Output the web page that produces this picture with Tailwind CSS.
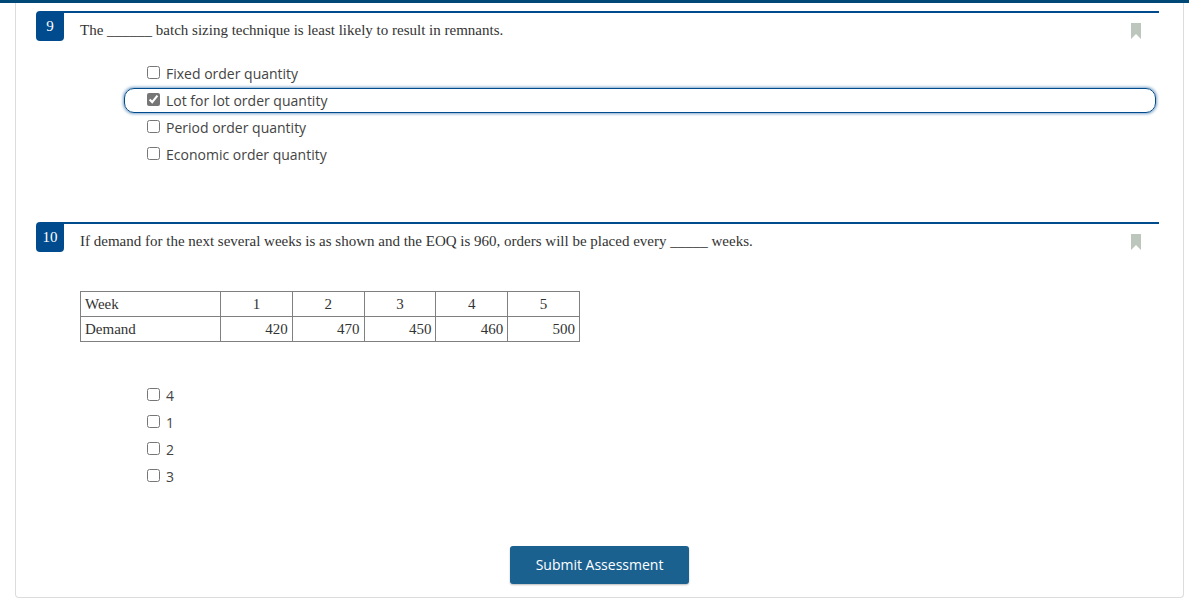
<!DOCTYPE html>
<html lang="en">
<head>
<meta charset="utf-8">
<meta name="viewport" content="width=device-width, initial-scale=1">
<title>Assessment</title>
<script src="https://cdn.jsdelivr.net/npm/@tailwindcss/browser@4"></script>
</head>
<body class="bg-white text-[#333] font-['Open_Sans',sans-serif] text-sm">
<header class="h-[3px] bg-[#004976]"></header>
<main class="ml-[15px] mr-[5px] rounded-b border border-t-0 border-[#dcdcdc] pt-2 pb-[13px]">
<form>
  <section class="ml-5 mr-6 flex h-[211px] items-start">
    <div class="flex h-[30px] w-7 shrink-0 items-center justify-center rounded-l rounded-br bg-[#004b8d] pt-0.5 font-['Liberation_Serif',serif] text-[15px] text-white">9</div>
    <div class="min-w-0 grow border-t-2 border-[#004b8d] pl-4">
      <div class="flex items-start justify-between pt-[7px] pr-[18px]">
        <h2 id="q9" class="font-['Liberation_Serif',serif] text-[15px] leading-5">The ______ batch sizing technique is least likely to result in remnants.</h2>
        <button type="button" aria-label="Bookmark question 9" class="mt-[3px]"><svg class="block h-4 w-[10px]" viewBox="0 0 10 16"><path d="M0 0H10V16L5 11L0 16Z" fill="#bcc6bc"/></svg></button>
      </div>
      <div role="group" aria-labelledby="q9" class="mt-[21px] mr-[3px] ml-11 flex flex-col gap-0.5 text-[#444]">
        <label class="flex h-[25px] items-center gap-1.5 rounded-[10px] border border-transparent pl-[22px]"><input type="checkbox" class="mb-0.5 size-[13px]"><span class="pt-px">Fixed order quantity</span></label>
        <label class="flex h-[25px] items-center gap-1.5 rounded-[10px] border border-[#004b8d] pl-[22px] shadow-[0_0_3px_1px_#7fa5c9]"><input type="checkbox" checked class="mb-0.5 size-[13px] accent-[#767676]"><span class="pt-px">Lot for lot order quantity</span></label>
        <label class="flex h-[25px] items-center gap-1.5 rounded-[10px] border border-transparent pl-[22px]"><input type="checkbox" class="mb-0.5 size-[13px]"><span class="pt-px">Period order quantity</span></label>
        <label class="flex h-[25px] items-center gap-1.5 rounded-[10px] border border-transparent pl-[22px]"><input type="checkbox" class="mb-0.5 size-[13px]"><span class="pt-px">Economic order quantity</span></label>
      </div>
    </div>
  </section>
  <section class="ml-5 mr-6 flex items-start">
    <div class="flex h-[30px] w-7 shrink-0 items-center justify-center rounded-l rounded-br bg-[#004b8d] pt-0.5 font-['Liberation_Serif',serif] text-[15px] text-white">10</div>
    <div class="min-w-0 grow border-t-2 border-[#004b8d] pl-4">
      <div class="flex items-start justify-between pt-[7px] pr-[18px]">
        <h2 id="q10" class="font-['Liberation_Serif',serif] text-[15px] leading-5">If demand for the next several weeks is as shown and the EOQ is 960, orders will be placed every _____ weeks.</h2>
        <button type="button" aria-label="Bookmark question 10" class="mt-[3px]"><svg class="block h-4 w-[10px]" viewBox="0 0 10 16"><path d="M0 0H10V16L5 11L0 16Z" fill="#bcc6bc"/></svg></button>
      </div>
      <table class="mt-10 w-[500px] table-fixed border-collapse font-['Liberation_Serif',serif] text-[15px] leading-6">
        <tr>
          <th scope="row" class="w-[140px] border border-[#808080] px-1 text-left font-normal">Week</th>
          <td class="border border-[#808080] text-center">1</td>
          <td class="border border-[#808080] text-center">2</td>
          <td class="border border-[#808080] text-center">3</td>
          <td class="border border-[#808080] text-center">4</td>
          <td class="border border-[#808080] text-center">5</td>
        </tr>
        <tr>
          <th scope="row" class="border border-[#808080] px-1 text-left font-normal">Demand</th>
          <td class="border border-[#808080] px-1 text-right">420</td>
          <td class="border border-[#808080] px-1 text-right">470</td>
          <td class="border border-[#808080] px-1 text-right">450</td>
          <td class="border border-[#808080] px-1 text-right">460</td>
          <td class="border border-[#808080] px-1 text-right">500</td>
        </tr>
      </table>
      <div role="group" aria-labelledby="q10" class="mt-[41px] mr-[3px] ml-11 flex flex-col gap-0.5 text-[#444]">
        <label class="flex h-[25px] items-center gap-1.5 rounded-[10px] border border-transparent pl-[22px]"><input type="checkbox" class="mb-0.5 size-[13px]"><span class="pt-px">4</span></label>
        <label class="flex h-[25px] items-center gap-1.5 rounded-[10px] border border-transparent pl-[22px]"><input type="checkbox" class="mb-0.5 size-[13px]"><span class="pt-px">1</span></label>
        <label class="flex h-[25px] items-center gap-1.5 rounded-[10px] border border-transparent pl-[22px]"><input type="checkbox" class="mb-0.5 size-[13px]"><span class="pt-px">2</span></label>
        <label class="flex h-[25px] items-center gap-1.5 rounded-[10px] border border-transparent pl-[22px]"><input type="checkbox" class="mb-0.5 size-[13px]"><span class="pt-px">3</span></label>
      </div>
    </div>
  </section>
  <div class="mt-[57px] flex justify-center">
    <button type="submit" class="h-[38px] w-[179px] rounded-[3px] bg-[#1a6190] font-medium text-white shadow-[0_1px_2px_#0004]">Submit Assessment</button>
  </div>
</form>
</main>
</body>
</html>
